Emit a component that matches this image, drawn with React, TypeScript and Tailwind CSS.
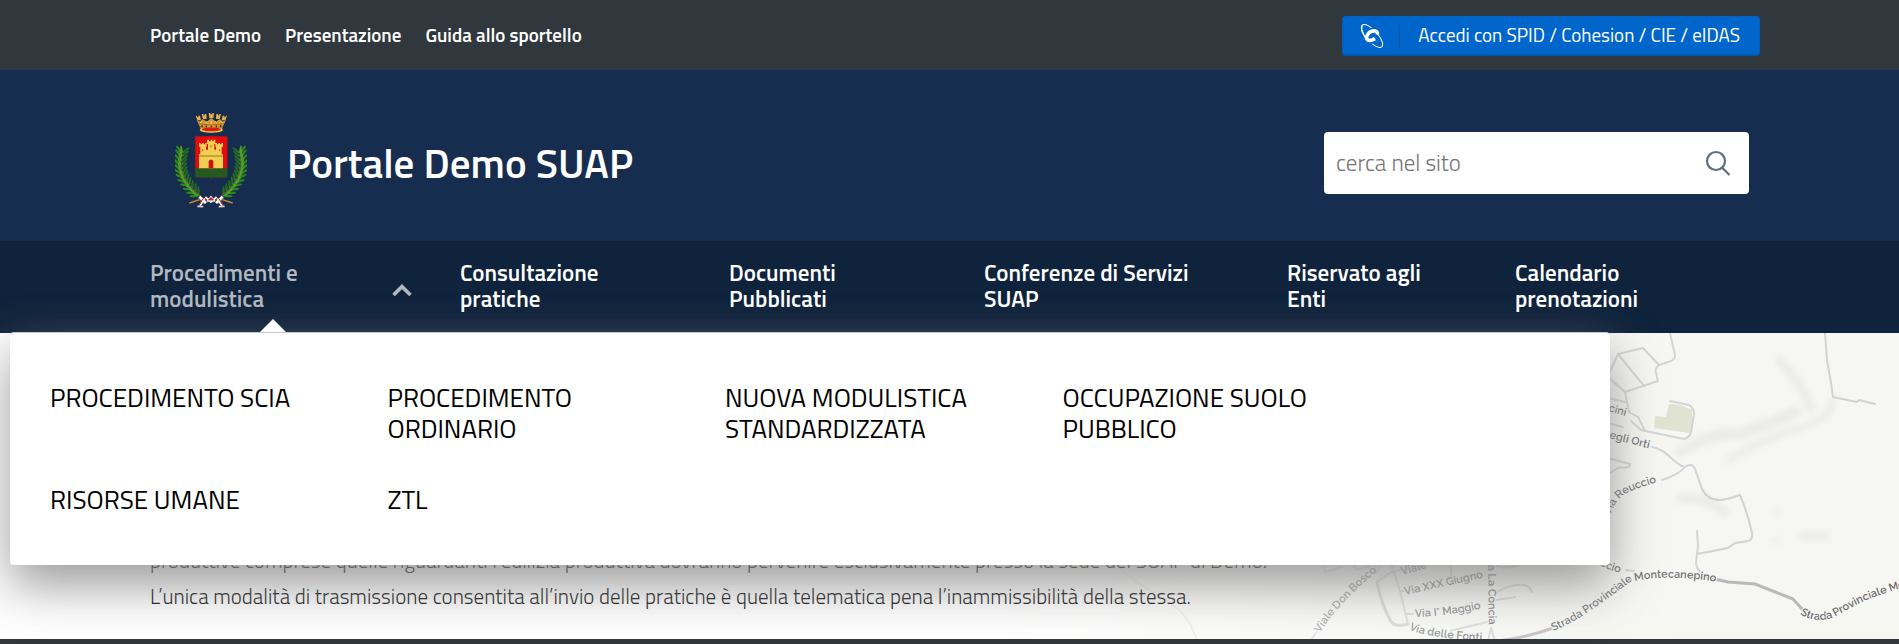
const topLinks = ['Portale Demo', 'Presentazione', 'Guida allo sportello'];

const navItems = [
    'Consultazione pratiche',
    'Documenti Pubblicati',
    'Conferenze di Servizi SUAP',
    'Riservato agli Enti',
    'Calendario prenotazioni',
];

const megaItems = [
    'PROCEDIMENTO SCIA',
    'PROCEDIMENTO ORDINARIO',
    'NUOVA MODULISTICA STANDARDIZZATA',
    'OCCUPAZIONE SUOLO PUBBLICO',
    'RISORSE UMANE',
    'ZTL',
];

// x, y, direction of the stem in degrees
const stem = [
    [66, 144, 98],
    [65, 155, 94],
    [63, 168, 92],
    [62, 181, 88],
    [63, 194, 84],
    [67, 207, 76],
    [72, 219, 68],
    [79, 231, 60],
    [87, 242, 54],
    [96, 253, 50],
    [106, 263, 46],
    [116, 272, 42],
];

function Branch() {
    return (
        <g>
            <path d="M66 138 C56 190 66 235 140 288" fill="none" stroke="#8a6a35" strokeWidth="3" />
            {stem.map(([x, y, a], i) => (
                <g key={i} transform={`translate(${x} ${y}) rotate(${a + 180})`}>
                    <ellipse cx="13" cy="0" rx="15" ry="3.8" transform="rotate(-46)" fill="#2b851c" />
                    <ellipse cx="13" cy="0" rx="15" ry="3.8" transform="rotate(46)" fill="#1d6a22" />
                    <ellipse cx="11" cy="0" rx="12" ry="3" transform="rotate(-16)" fill="#4f9f2a" />
                    <circle cx="4" cy="5" r="1.8" fill="#b5482c" />
                </g>
            ))}
            <path d="M88 294 L128 281" stroke="#c98a2b" strokeWidth="4" />
            <path d="M118 275 L138 294" stroke="#fff" strokeWidth="9" />
            <path d="M114 278 L132 297" stroke="#2c8b3c" strokeWidth="3" />
            <path d="M122 272 L142 291" stroke="#cf2b2b" strokeWidth="3" />
            <path d="M134 280 L120 303" stroke="#f3f3f3" strokeWidth="5" />
            <path d="M130 280 L116 301" stroke="#cf2b2b" strokeWidth="3" />
            <path d="M112 304 L130 305" stroke="#d9c9c0" strokeWidth="5" />
        </g>
    );
}

function Crest() {
    return (
        <svg viewBox="45 21 216 306" className="h-[102px] w-[72px] shrink-0" role="img" aria-label="Stemma">
            <Branch />
            <g transform="translate(306 0) scale(-1 1)">
                <Branch />
            </g>
            <path d="M136 276 L153 291 L170 276 M142 290 L153 276 L164 290" fill="none" stroke="#eee" strokeWidth="6" />
            <path d="M146 286 L153 279 L160 286" fill="none" stroke="#c62828" strokeWidth="4" />

            {/* crown */}
            <path
                d="M110 44 L120 66 L124 77 Q154 86 184 77 L188 66 L198 44 L188 50 L180 42 L168 50 L154 40 L140 50 L128 42 L120 50 Z"
                fill="#d99c35"
            />
            <path
                d="M107 32 h4 v4 h4 v-4 h5 l3 14 h-11 z M125 27 h5 v4 h4 v-4 h5 l1 15 h-11 z M146 24 h5 v4 h6 v-4 h5 l-2 16 h-12 z M169 27 h5 v4 h4 v-4 h5 l-4 15 h-11 z M188 32 h5 v4 h4 v-4 h4 l-5 14 h-11 z"
                fill="#e5b04a"
            />
            <path d="M117 56 q36 9 74 0 M120 65 q34 8 68 0" fill="none" stroke="#8a5a1c" strokeWidth="2" />
            <path d="M126 59 v8 M139 61 v8 M154 62 v8 M169 61 v8 M182 59 v8" stroke="#4b3214" strokeWidth="4" />
            <path d="M120 54 l5 -5 M138 54 l3 -5 M154 48 v8 M169 54 l-3 -5 M188 54 l-5 -5" stroke="#f6dd7c" strokeWidth="3" />
            <ellipse cx="154" cy="75" rx="35" ry="8" fill="#f2c54f" />
            <ellipse cx="154" cy="73" rx="29" ry="6" fill="#d3200f" />

            {/* shield */}
            <path d="M105 93 h98 v117 q0 8 -8 8 h-33 q-7 0 -8 5 q-1 -5 -8 -5 h-33 q-8 0 -8 -8 z" fill="#e30b0b" />
            <path d="M105 190 h98 v20 q0 8 -8 8 h-33 q-7 0 -8 5 q-1 -5 -8 -5 h-33 q-8 0 -8 -8 z" fill="#245a1e" />
            <path d="M105 93 h98 v117 q0 8 -8 8 h-82 q-8 0 -8 -8 z" fill="none" stroke="#2b2f4a" strokeWidth="2" />
            <path
                d="M117 190 V148 h4 V125 h-4 v-11 h5 v4 h4 v-4 h5 v4 h4 v-4 h5 v11 h-2 v9 h6 v-17 h-3 v-13 h6 v5 h5 v-5 h5 v5 h4 v-5 h5 v13 h-3 v17 h5 v-9 h-2 v-11 h5 v4 h4 v-4 h5 v4 h4 v-4 h5 v11 h-4 v23 h4 V190 z"
                fill="#f0cf52"
            />
            <path d="M117 153 h72 M128 132 v7 M153 120 v7 M179 132 v7" stroke="#a8741d" strokeWidth="3" />
            <path d="M146 190 v-22 q7 -9 14 0 v22 z" fill="#c8140c" />
        </svg>
    );
}

function CohesionIcon() {
    return (
        <svg viewBox="0 0 24 24" className="size-6" fill="none" stroke="#fff" aria-hidden="true">
            <ellipse cx="12" cy="12" rx="14.6" ry="5.6" transform="rotate(48 12 12)" strokeWidth="1" />
            <path d="M17.5 9.2 C16.8 5.6 10 5.2 6.6 9.4 C3 14.6 6.8 19.4 14.6 16.4" stroke="#0066cc" strokeWidth="5" />
            <path d="M17.4 10.6 C18.4 5.6 11 6 8.2 9.8 C4.4 15.4 8 18.6 15 14.6" strokeWidth="3.6" />
            <path d="M2.4 1.6 C0 5 3.4 12 8.6 17" strokeWidth="1.4" />
        </svg>
    );
}

const roads = [
    'M1670 333 L1675 355 Q1675 361 1668 362 L1659 365 L1643 348 L1618 354 L1608 376',
    'M1618 354 L1644 386',
    'M1659 365 Q1654 369 1656 373 L1658 381 L1625 392 L1608 377',
    'M1625 392 L1629 412 L1638 417 L1645 431',
    'M1631 421 L1641 430 L1684 439 Q1690 437 1691 432 L1694 414 Q1694 408 1689 405 L1670 401',
    'M1608 398 L1625 402',
    'M1608 423 L1623 427',
    'M1608 458 L1630 464 L1629 467 L1618 468 L1608 474',
    'M1652 447 Q1662 449 1670 457 T1685 467 Q1692 462 1695 469 L1702 489 Q1707 500 1720 500 Q1729 499 1740 495 Q1748 514 1752 533 Q1753 540 1748 541 L1735 543 L1728 548 Q1713 551 1697 554',
    'M1685 467 Q1680 474 1662 480',
    'M1697 531 L1698 546 L1696 562 Q1696 571 1706 576',
    'M1825 333 L1827 360 L1831 383 L1833 397 L1857 402 L1859 400 L1875 404',
    'M1119 568 Q1135 582 1158 595 T1190 624 L1198 641',
    'M1310 641 L1319 629 M1376 573 L1382 563',
    'M1391 563 L1400 591 L1408 624',
    'M1377 582 L1391 572 L1400 570 M1400 591 L1404 591 M1406 614 L1413 614',
    'M1323 563 L1325 572 L1342 567 M1354 563 L1356 570 L1370 566',
    'M1451 563 L1451 575',
    'M1497 592 Q1512 583 1524 585 Q1530 587 1532 592',
    'M1497 600 L1515 597',
    'M1450 631 L1487 622',
    'M1491 628 L1488 641 M1491 628 L1495 641',
    'M1497 566 Q1508 570 1520 564',
    'M1626 570 L1634 571',
];

const labels: [string, string, string][] = [
    ['strada-est', 'M1800 614 Q1814 623 1832 618 Q1845 611 1860 603 T1930 580', 'Strada Provinciale Mo'],
    ['montecanepino', 'M1635 581 Q1668 574 1718 582', 'Montecanepino'],
    ['strada-ovest', 'M1553 631 Q1575 622 1600 604 T1642 573', 'Strada Provinciale'],
    ['reuccio', 'M1610 516 Q1614 503 1622 496 T1676 477', 'Via Reuccio'],
    ['orti', 'M1609 438 L1670 454', 'egli Orti'],
    ['cini', 'M1608 411 L1640 420', 'cini'],
    ['uccio', 'M1600 565 Q1612 573 1640 576', 'ccio'],
    ['bosco', 'M1320 633 Q1340 600 1387 563', 'Viale Don Bosco'],
    ['viale', 'M1402 575 L1450 561', 'Viale'],
    ['giugno', 'M1405 595 L1500 574', 'Via XXX Giugno'],
    ['maggio', 'M1415 617 Q1455 616 1500 604', 'Via I° Maggio'],
    ['fonti', 'M1409 629 Q1422 638 1500 642', 'Via delle Fonti'],
    ['concia', 'M1488 562 L1489 645', 'ia La Concia'],
];

function StreetMap() {
    return (
        <svg
            viewBox="1000 333 899 306"
            preserveAspectRatio="xMaxYMin slice"
            className="absolute inset-y-0 right-0 h-full w-[899px]"
            aria-hidden="true"
        >
            <defs>
                <linearGradient id="fade">
                    <stop offset="0" stopColor="#fff" />
                    <stop offset="0.45" stopColor="#fff" stopOpacity="0.35" />
                    <stop offset="0.8" stopColor="#fff" stopOpacity="0" />
                </linearGradient>
                <filter id="soft" x="-20%" y="-20%" width="140%" height="140%">
                    <feGaussianBlur stdDeviation="3" />
                </filter>
            </defs>
            <rect x="1000" y="333" width="899" height="306" fill="#f6f7f2" />

            {/* relief */}
            <g fill="none" stroke="#ebece8" strokeLinecap="round" filter="url(#soft)">
                <path d="M1780 361 L1800 385 L1811 408" strokeWidth="9" />
                <path d="M1680 452 Q1710 432 1740 434 Q1770 424 1795 412" strokeWidth="12" />
                <path d="M1728 460 Q1760 440 1800 428 Q1834 418 1832 400" strokeWidth="7" />
                <path d="M1680 498 L1705 500 L1725 512" strokeWidth="10" />
                <path d="M1803 536 L1826 536" strokeWidth="9" />
                <path d="M1772 541 L1780 540 M1775 513 L1780 512" strokeWidth="4" />
            </g>

            <path d="M1669 404 L1681 405 L1692 410 L1692 421 L1690 433 L1654 428 L1655 416 L1666 417 Z" fill="#dfe2cf" />
            <g fill="none" stroke="#d2d2d4" strokeWidth="2" strokeLinejoin="round" strokeLinecap="round">
                {roads.map((d) => (
                    <path key={d} d={d} />
                ))}
                <path d="M1377 582 Q1380 600 1390 620 Q1394 628 1408 624" strokeWidth="3" stroke="#cbcbcd" />
                <path d="M1497 641 Q1525 638 1553 628" strokeWidth="3" stroke="#b9b9ba" />
                <path d="M1706 577 L1728 582 L1755 584 L1793 599 L1802 609" strokeWidth="3" stroke="#b9b9ba" />
            </g>

            <g
                className="font-['Raleway','Open_Sans',sans-serif] text-[11px] font-semibold"
                fill="#6c6c70"
                stroke="#f6f7f2"
                strokeWidth="2"
                paintOrder="stroke"
            >
                {labels.map(([id, d, text]) => (
                    <g key={id}>
                        <path id={id} d={d} fill="none" stroke="none" />
                        <text>
                            <textPath href={`#${id}`}>{text}</textPath>
                        </text>
                    </g>
                ))}
            </g>
            <rect x="1000" y="333" width="899" height="306" fill="url(#fade)" />
        </svg>
    );
}

function MegaMenu() {
    return (
        <div className="absolute top-[91px] left-2.5 z-10 w-[1600px] max-w-full rounded border-t border-[#c5cad1] bg-white px-10 pt-[49px] pb-[50px] shadow-[0_20px_50px_rgba(135,135,135,0.85)]">
            <svg viewBox="0 0 26 13" className="absolute -top-3.5 left-[250px] h-[13px] w-[26px]" aria-hidden="true">
                <path d="M0 13 L13 0 L26 13 Z" fill="#fff" />
            </svg>
            <ul className="grid max-w-[1350px] grid-cols-4 gap-y-10">
                {megaItems.map((item) => (
                    <li key={item} className="pr-16">
                        <a href="#" className="block text-[26px] leading-[31px] font-medium text-black">
                            {item}
                        </a>
                    </li>
                ))}
            </ul>
        </div>
    );
}

export default function App() {
    return (
        <div className="flex min-h-screen flex-col overflow-x-hidden bg-white font-['Titillium_Web',Roboto,sans-serif]">
            {/* Top bar */}
            <div className="border-t border-[#3b3535] bg-[#30373d]">
                <div className="mx-auto flex h-[69px] w-full max-w-[1621px] items-center justify-between pl-[11px]">
                    <nav className="flex gap-6 text-[19px] font-semibold text-white">
                        {topLinks.map((label) => (
                            <a key={label} href="#">
                                {label}
                            </a>
                        ))}
                    </nav>
                    <button
                        type="button"
                        className="flex h-10 items-center rounded bg-[#0066cc] pr-5 pl-[18px] text-[19px] text-white shadow-[inset_0_-1px_2px_rgba(0,0,0,0.25)]"
                    >
                        <CohesionIcon />
                        <span className="mr-[18px] ml-[15px] h-6 w-px bg-[#004d99]" />
                        Accedi con SPID / Cohesion / CIE / eIDAS
                    </button>
                </div>
            </div>

            {/* Header */}
            <header className="bg-[#172d4f]">
                <div className="mx-auto flex w-full max-w-[1621px] items-center justify-between pt-[42px] pr-[11px] pb-[27px] pl-9">
                    <a href="#" className="flex items-center gap-10 text-white">
                        <Crest />
                        <span className="text-[41px] leading-[50px] font-semibold">Portale Demo SUAP</span>
                    </a>
                    <form className="flex h-[62px] w-[425px] items-center rounded-sm bg-white pr-[18px] pl-3">
                        <input
                            type="search"
                            aria-label="cerca nel sito"
                            placeholder="cerca nel sito"
                            className="min-w-0 flex-1 text-[23px] font-light outline-none placeholder:text-[#757575]"
                        />
                        <button type="submit" aria-label="Cerca">
                            <svg viewBox="0 0 26 26" className="size-[26px]" fill="none" stroke="#5c6f82" strokeWidth="2.2">
                                <circle cx="11" cy="11" r="9" />
                                <path d="M17 17.5 L24.5 25" />
                            </svg>
                        </button>
                    </form>
                </div>
            </header>

            {/* Main navigation */}
            <nav className="relative z-10 bg-[#0f233c]">
                <ul className="mx-auto grid w-full max-w-[1621px] grid-cols-[310fr_269fr_255fr_303fr_228fr_245fr] pt-[19px] pb-[21px] pl-[11px] text-[23px] leading-[26px] font-semibold text-white">
                    <li className="pr-12">
                        <button type="button" aria-expanded="true" className="flex w-full items-center justify-between text-left text-[#b2b8c1]">
                            <span className="max-w-[180px]">Procedimenti e modulistica</span>
                            <svg viewBox="0 0 20 12" className="mt-2 h-3 w-5" fill="none" stroke="currentColor" strokeWidth="3.6" aria-hidden="true">
                                <path d="M1.5 11 L10 2.6 L18.5 11" />
                            </svg>
                        </button>
                    </li>
                    {navItems.map((item) => (
                        <li key={item} className="pr-14">
                            <a href="#" className="block">
                                {item}
                            </a>
                        </li>
                    ))}
                </ul>
                <MegaMenu />
            </nav>

            <main className="relative">
                <StreetMap />
                <div className="relative mx-auto w-full max-w-[1621px] pt-[209px] pb-[25px] pl-[11px] text-[21px] leading-9 font-light text-[#19191a]">
                    <p>
                        produttive comprese quelle riguardanti l’edilizia produttiva dovranno pervenire esclusivamente presso la sede del SUAP di Demo.
                    </p>
                    <p>
                        L’unica modalità di trasmissione consentita all’invio delle pratiche è quella telematica pena l’inammissibilità della stessa.
                    </p>
                </div>
            </main>

            <footer className="min-h-[5px] flex-1 bg-[#30373d]" />
        </div>
    );
}
